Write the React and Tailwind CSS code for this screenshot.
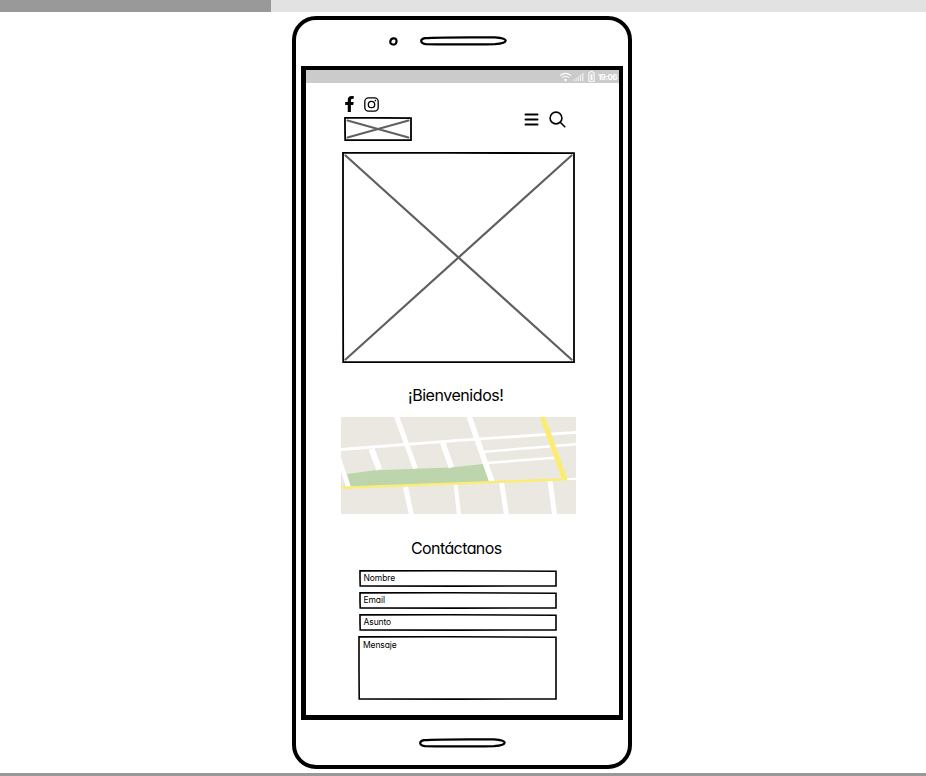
import React from "react";
import { FaFacebookF } from "react-icons/fa";

// Slightly uneven pen outline stretched round its parent box.
function Outline({ w, h, stroke = 1.6 }) {
  return (
    <svg className="pointer-events-none absolute inset-0" width={w} height={h} viewBox={`0 0 ${w} ${h}`} fill="none" stroke="#000" strokeWidth={stroke}>
      <path d={`M1 .9 L${w * 0.45} 0.8 L${w - 1} 1.2 L${w - 1} ${h * 0.6} L${w - 1} ${h - 1} L${w * 0.5} ${h - 0.9} L1.2 ${h - 1} L1 ${h * 0.5} Z`} />
    </svg>
  );
}

function Placeholder({ w, h, cross, className }) {
  return (
    <div className={"relative " + className}>
      <Outline w={w} h={h} stroke={1.8} />
      <svg className="block" width={w} height={h} viewBox={`0 0 ${w} ${h}`} stroke="#606060" strokeWidth={cross} strokeLinecap="round">
        <path d={`M3.5 3.5 L${w - 3.5} ${h - 3.5} M${w - 3.5} 3.5 L3.5 ${h - 3.5}`} />
      </svg>
    </div>
  );
}

function Field({ label, w, h, className }) {
  return (
    <div className={"relative " + className}>
      <Outline w={w} h={h} />
      {label}
    </div>
  );
}

function Slot() {
  return (
    <svg width="87" height="10" viewBox="0 0 87 10" fill="none" stroke="#000" strokeWidth="2.2">
      <path d="M5 2.2 C22 .8 63 1.5 75 1.3 Q85.500 2 85.700 4.700 Q85.500 7.500 75 8.200 C60 8.800 22 8.300 6 8.200 Q1.200 7.500 1.200 5 Q1.200 3 5 2.200Z" />
    </svg>
  );
}

function StatusBar() {
  return (
    <div className="flex h-[13px] shrink-0 items-center justify-end bg-[#cbcbcb] pr-[2px] text-white">
      <svg width="13" height="10" viewBox="0 0 13 10" fill="none" stroke="currentColor" strokeWidth="1.1">
        <path d="M1 3.600Q6.500-.8 12 3.600M3 5.700Q6.500 2.800 10 5.700" />
        <circle cx="6.500" cy="8" r="1.200" fill="currentColor" stroke="none" />
      </svg>
      <svg className="ml-px" width="11" height="10" viewBox="0 0 11 10" stroke="currentColor" strokeWidth="1.200" opacity=".75">
        <path d="M1 9V7.500M3.200 9V6M5.400 9V4.500M7.600 9V2.800M9.800 9V1" />
      </svg>
      <svg className="ml-[4px]" width="7" height="11" viewBox="0 0 7 11" fill="none" stroke="currentColor">
        <path d="M.8 1.700H2V.7H5V1.700H6.200V10.300H.8Z" />
        <path d="M3.500 3V9" strokeWidth="2" />
      </svg>
      <span className="ml-[3px] w-[19px] text-[8px] leading-[14px] font-bold tracking-[-0.600px] whitespace-nowrap">19:06</span>
    </div>
  );
}

function StreetMap() {
  return (
    <svg className="mt-[10px] ml-[35px] block shrink-0" width="235" height="97" viewBox="0 0 235 97" fill="none">
      <rect width="235" height="97" fill="#ebe8e1" />
      <path d="M6 57L34 53.300L109 50.500L142.300 47L149 65L9.700 70Z" fill="#bcd5ac" />
      <g stroke="#fff">
        <path d="M0 32.500L114 23.700L235 15.300" strokeWidth="2.800" />
        <path d="M55 -2L74.500 51.500" strokeWidth="5" />
        <path d="M30.500 32L38.300 52.300" strokeWidth="6" />
        <path d="M101.700 25.700L110.500 50.500" strokeWidth="5.500" />
        <path d="M-4 36L7.500 70" strokeWidth="4.500" />
        <path d="M127.700 -2L151 65" strokeWidth="5.500" />
        <path d="M143 34.800L235 27.300M146 46L214 40.700" strokeWidth="2.500" />
        <path d="M225 62.300L235 61.700" strokeWidth="2" />
        <path d="M64.500 70L70.500 98M160.700 66L165.500 98M209 64L213.600 98" strokeWidth="5" />
        <path d="M114.700 68L118 98" strokeWidth="4" />
      </g>
      <path d="M0 70.700L226 62.300" stroke="#fbed74" strokeWidth="2.400" />
      <path d="M200.700 -2L224 63" stroke="#fbed74" strokeWidth="5.300" />
    </svg>
  );
}

export default function App() {
  return (
    <div className="flex h-[776px] w-[926px] flex-col overflow-hidden bg-white font-['Inter','Liberation_Sans',sans-serif] text-black [font-feature-settings:'cv11']">
      <div className="h-3 shrink-0 bg-[#e2e2e2]">
        <div className="h-full w-[271px] bg-[#999]" />
      </div>
      <main className="flex h-[761px] shrink-0 justify-center pt-[3.500px] pr-[2px]">
        <div className="flex h-[753.500px] w-[340px] flex-col rounded-[24px] border-4 border-black">
          <div className="flex h-[46.500px] shrink-0 items-center pb-[3px] pl-[93px]">
            <svg width="9" height="9" viewBox="0 0 9 9" fill="none" stroke="#000" strokeWidth="2.200">
              <path d="M4.500 1.300Q7.700 1 7.500 4.500Q7 8 4 7.500Q.8 7 1.400 4Q2 1.500 4.500 1.300Z" />
            </svg>
            <div className="ml-[21.500px] flex"><Slot /></div>
          </div>
          <div className="ml-[5px] flex h-[654px] w-[322px] shrink-0 flex-col border-4 border-b-5 border-l-5 border-black">
            <StatusBar />
            <header className="flex h-[59px] shrink-0 pt-3 pl-[38px]">
              <div className="w-[67px]">
                <div className="flex h-[18px] items-center">
                  <FaFacebookF className="h-4 w-[11px]" />
                  <svg className="ml-[9px]" width="15" height="15" viewBox="0 0 15 15" fill="none" stroke="#000" strokeWidth="1.300">
                    <rect x=".8" y=".8" width="13.400" height="13.400" rx="3.700" />
                    <circle cx="7.500" cy="7.500" r="3.200" />
                    <circle cx="11.400" cy="3.600" r=".8" fill="#000" stroke="none" />
                  </svg>
                </div>
                <Placeholder w={68} h={24} cross={2} className="mt-[4px] h-[24px] w-[68px]" />
              </div>
              <svg className="mt-[18px] ml-[113px]" width="15" height="13" viewBox="0 0 15 13" stroke="#000" strokeWidth="2" strokeLinecap="round">
                <path d="M1.500 1.500H13.500M1.500 6.500H13.500M1.500 11.500H13.500" />
              </svg>
              <svg className="mt-[16px] ml-[10px]" width="17" height="17" viewBox="0 0 17 17" fill="none" stroke="#000" strokeWidth="1.600" strokeLinecap="round">
                <circle cx="7" cy="7" r="5.900" />
                <path d="M11.200 11.200L15.800 15.800" />
              </svg>
            </header>
            <Placeholder w={233} h={211} cross={2.2} className="mt-[10px] ml-[36px] h-[211px] w-[233px] shrink-0" />
            <h2 className="mt-[20px] ml-[102px] h-6 w-[98px] shrink-0 text-[16px] leading-6 tracking-[-0.450px] whitespace-nowrap">¡Bienvenidos!</h2>
            <StreetMap />
            <h2 className="mt-[22px] ml-[105px] h-6 w-[94px] shrink-0 text-[16px] leading-6 tracking-[-0.600px] whitespace-nowrap">Contáctanos</h2>
            <form className="mt-[10px] ml-[53px] flex flex-col gap-[5px] text-[8.500px] tracking-[-0.100px]">
              <Field label="Nombre" w={198} h={17} className="h-[17px] w-[198px] pl-[4.500px] leading-[16px]" />
              <Field label="Email" w={198} h={17} className="h-[17px] w-[198px] pl-[4.500px] leading-[16px]" />
              <Field label="Asunto" w={198} h={17} className="h-[17px] w-[198px] pl-[4.500px] leading-[16px]" />
              <Field label="Mensaje" w={199} h={64} className="-ml-px h-[64px] w-[199px] pl-[5px] leading-[18px]" />
            </form>
          </div>
          <div className="flex flex-1 items-center pl-[123px]"><Slot /></div>
        </div>
      </main>
      <div className="h-[3px] shrink-0 bg-[#999]" />
    </div>
  );
}
